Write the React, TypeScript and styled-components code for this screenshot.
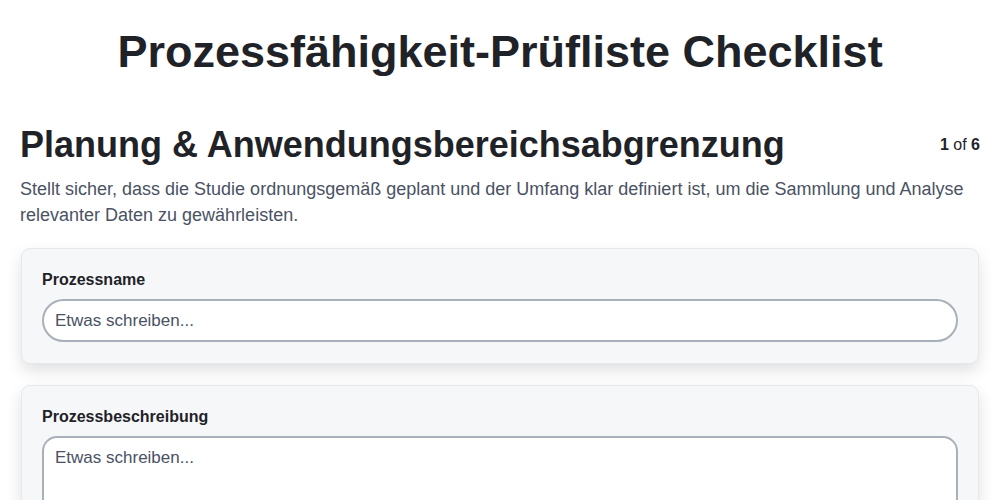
import styled, { createGlobalStyle } from "styled-components"

const GlobalStyle = createGlobalStyle`
  body {
    margin: 0;
    background: #ffffff;
    font-family: "Liberation Sans", Arial, sans-serif;
    color: #1f2328;
  }
`

const Page = styled.div`
  padding: 0 20px;
`

const Title = styled.h1`
  margin: 0;
  padding: 26px 0 0;
  text-align: center;
  font-size: 45px;
  line-height: 52px;
  font-weight: 700;
  color: #1f2328;
`

const SectionHeader = styled.div`
  display: flex;
  justify-content: space-between;
  align-items: flex-start;
  margin-top: 45px;
`

const SectionTitle = styled.h2`
  margin: 0;
  font-size: 36px;
  line-height: 44px;
  font-weight: 700;
  color: #1f2328;
`

const Counter = styled.div`
  font-size: 16px;
  line-height: 20px;
  padding-top: 12px;
  color: #1f2328;

  b {
    font-weight: 700;
  }
`

const Description = styled.p`
  margin: 9px 0 20px;
  font-size: 18px;
  line-height: 26px;
  color: #4a5263;
`

const Cards = styled.div`
  display: flex;
  flex-direction: column;
  gap: 21px;
  padding: 0 1px;
`

const Card = styled.div`
  background: #f6f7f9;
  border: 1px solid #e6e8ec;
  border-radius: 9px;
  box-shadow: 0 7px 16px rgba(0, 0, 0, 0.12);
  padding: 20px 20px 21px;
`

const Label = styled.label`
  display: block;
  font-size: 16px;
  line-height: 22px;
  font-weight: 700;
  color: #1f2328;
  margin-bottom: 8px;
`

const TextInput = styled.input`
  box-sizing: border-box;
  width: 100%;
  height: 43px;
  border: 2px solid #a8b0b9;
  border-radius: 22px;
  background: #ffffff;
  padding: 0 11px;
  font-family: "Liberation Sans", Arial, sans-serif;
  font-size: 17px;
  color: #1f2328;
  outline: none;

  &::placeholder {
    color: #4a5263;
  }
`

const TextArea = styled.textarea<{ $rows: number }>`
  box-sizing: border-box;
  width: 100%;
  height: ${(p) => p.$rows * 40}px;
  border: 2px solid #a8b0b9;
  border-radius: 15px;
  background: #ffffff;
  padding: 9px 11px;
  font-family: "Liberation Sans", Arial, sans-serif;
  font-size: 17px;
  line-height: 22px;
  color: #1f2328;
  resize: none;
  outline: none;

  &::placeholder {
    color: #4a5263;
  }
`

export default function App() {
  return (
    <>
      <GlobalStyle />
      <Page>
        <Title>Prozessfähigkeit-Prüfliste Checklist</Title>
        <SectionHeader>
          <SectionTitle>Planung &amp; Anwendungsbereichsabgrenzung</SectionTitle>
          <Counter>
            <b>1</b> of <b>6</b>
          </Counter>
        </SectionHeader>
        <Description>
          Stellt sicher, dass die Studie ordnungsgemäß geplant und der Umfang klar definiert ist, um die Sammlung und
          Analyse relevanter Daten zu gewährleisten.
        </Description>
        <Cards>
          <Card>
            <Label>Prozessname</Label>
            <TextInput placeholder="Etwas schreiben..." />
          </Card>
          <Card>
            <Label>Prozessbeschreibung</Label>
            <TextArea $rows={3} placeholder="Etwas schreiben..." />
          </Card>
        </Cards>
      </Page>
    </>
  )
}
